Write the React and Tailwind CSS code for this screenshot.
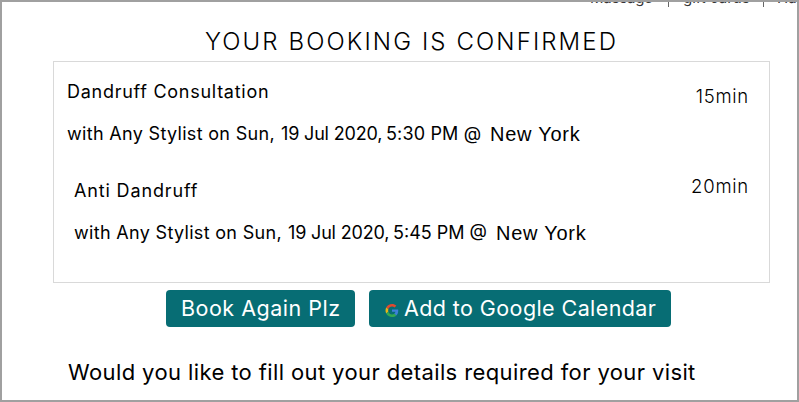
function NavStrip() {
  return (
    <nav className="flex h-[5px] shrink-0 items-end overflow-hidden pl-[588px] text-[15px] leading-[18px] text-[#333]">
      <span className="w-[78px] shrink-0 tracking-[-0.2px] whitespace-nowrap">Massage</span>
      <span className="mr-[14px] h-full w-px shrink-0 bg-[#666]" />
      <span className="w-[80px] shrink-0 whitespace-nowrap">gift cards</span>
      <span className="mr-[13px] h-full w-px shrink-0 bg-[#666]" />
      <span className="shrink-0 whitespace-nowrap">Hair</span>
    </nav>
  );
}

function GoogleIcon() {
  return (
    <svg className="mt-[4px] mr-[5px] h-[13px] w-[14px] shrink-0" viewBox="0 0 48 48">
      <path fill="#e0492f" d="M24 9.5c3.54 0 6.71 1.22 9.21 3.6l6.85-6.85C35.9 2.38 30.47 0 24 0 14.62 0 6.51 5.38 2.56 13.22l7.98 6.19C12.43 13.72 17.74 9.5 24 9.5z" />
      <path fill="#3f80d8" d="M46.98 24.55c0-1.57-.15-3.09-.38-4.55H24v9.02h12.94c-.58 2.96-2.26 5.48-4.78 7.18l7.73 6c4.51-4.18 7.09-10.36 7.09-17.65z" />
      <path fill="#e8b416" d="M10.53 28.59c-.48-1.45-.76-2.99-.76-4.59s.27-3.14.76-4.59l-7.98-6.19C.92 16.46 0 20.12 0 24c0 3.88.92 7.54 2.56 10.78l7.97-6.19z" />
      <path fill="#34a853" d="M24 48c6.48 0 11.93-2.13 15.89-5.81l-7.73-6c-2.15 1.45-4.92 2.3-8.16 2.3-6.26 0-11.57-4.22-13.47-9.91l-7.98 6.19C6.51 42.62 14.62 48 24 48z" />
    </svg>
  );
}

export default function App() {
  return (
    <main className="flex h-[402px] w-[799px] flex-col overflow-hidden border-2 border-[#a0a0a0] bg-white font-['Inter',sans-serif] text-black">
      <NavStrip />
      <h1 className="mt-[18px] ml-[203px] h-[34px] text-[24px] leading-[34px] font-light tracking-[2.1px] whitespace-nowrap">
        YOUR BOOKING IS CONFIRMED
      </h1>
      <section className="mt-[2px] ml-[51px] flex h-[222px] w-[717px] shrink-0 justify-between border border-[#d9d9d9]">
        <div className="pl-[13px] text-[18px] leading-[24px] whitespace-nowrap">
          <p className="mt-[18px] tracking-[0.73px]">Dandruff Consultation</p>
          <div className="mt-[18px] flex">
            <span className="w-[214px] tracking-[0.32px]">with Any Stylist on Sun,</span>
            <span className="w-[105px] tracking-[-0.17px]">19 Jul 2020,</span>
            <span className="w-[104px] tracking-[0.15px]">5:30 PM @</span>
            <span className="font-['Liberation_Sans',sans-serif] text-[20px] tracking-[0.75px]">New York</span>
          </div>
          <p className="mt-[33px] ml-[7px] tracking-[0.85px]">Anti Dandruff</p>
          <div className="mt-[18px] ml-[7px] flex">
            <span className="w-[214px] tracking-[0.32px]">with Any Stylist on Sun,</span>
            <span className="w-[105px] tracking-[-0.17px]">19 Jul 2020,</span>
            <span className="w-[103px]">5:45 PM @</span>
            <span className="font-['Liberation_Sans',sans-serif] text-[20px] tracking-[0.75px]">New York</span>
          </div>
        </div>
        <div className="pr-[20px] text-right text-[18.5px] leading-[24px] font-light tracking-[0.75px]">
          <p className="mt-[22px]">15min</p>
          <p className="mt-[66px]">20min</p>
        </div>
      </section>
      <div className="mt-[7px] ml-[164px] flex gap-[14px] text-[21.5px] text-white">
        <button className="flex h-[37px] w-[189px] items-center rounded-[4px] bg-[#076d74] pl-[15px] tracking-[0.5px] whitespace-nowrap">
          Book Again Plz
        </button>
        <button className="flex h-[37px] w-[302px] items-center rounded-[4px] bg-[#076d74] pl-[16px] tracking-[0.41px] whitespace-nowrap">
          <GoogleIcon />
          Add to Google Calendar
        </button>
      </div>
      <p className="mt-[29px] ml-[66px] text-[22px] leading-[32px] tracking-[0.39px] whitespace-nowrap">
        Would you like to fill out your details required for your visit
      </p>
    </main>
  );
}
